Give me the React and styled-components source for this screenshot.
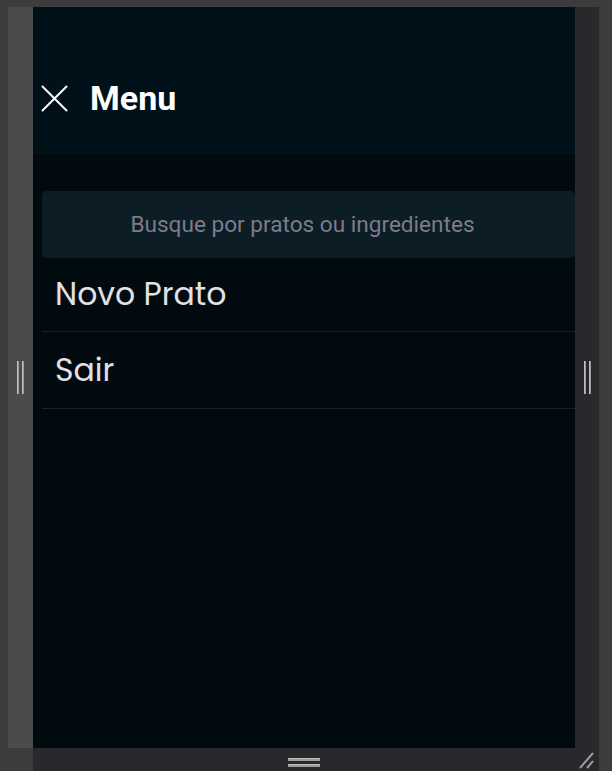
import React from "react";
import styled, { createGlobalStyle } from "styled-components";

const Global = createGlobalStyle`
  html, body { margin: 0; padding: 0; background: #3c3c3c; }
  body { width: 612px; height: 771px; overflow: hidden; }
  * { box-sizing: border-box; }
`;

const Frame = styled.div`
  display: grid;
  grid-template-columns: 8px 25px 542px 24px 13px;
  grid-template-rows: 7px 741px 23px;
  width: 612px;
  height: 771px;
  background: #3c3c3c;
`;

const SideStrip = styled.div`
  grid-column: ${(p) => p.$col};
  grid-row: 2;
  background: ${(p) => p.$bg};
  display: flex;
  align-items: center;
  justify-content: center;
  gap: 3px;
`;

const VGrip = styled.span`
  width: 2px;
  height: 33px;
  background: #9c9c9c;
  border-left: 1px solid #bdbdbd;
`;

const BottomBar = styled.div`
  grid-column: 3;
  grid-row: 3;
  background: #28292d;
  display: flex;
  flex-direction: column;
  align-items: center;
  justify-content: flex-start;
  padding-top: 10px;
  gap: 3px;
`;

const HGrip = styled.span`
  width: 32px;
  height: 2px;
  background: #9c9c9c;
  border-top: 1px solid #bdbdbd;
  box-sizing: content-box;
`;

const Corner = styled.div`
  grid-column: 4;
  grid-row: 3;
  background: #28292d;
  display: flex;
  align-items: flex-end;
  justify-content: flex-start;
  padding: 0 0 2px 4px;
`;

const Viewport = styled.div`
  grid-column: 3;
  grid-row: 2;
  background: #000a0f;
  display: flex;
  flex-direction: column;
  overflow: hidden;
`;

const Header = styled.header`
  height: 147px;
  background: #00111a;
  display: flex;
  align-items: flex-end;
  gap: 22px;
  padding: 0 0 41px 8px;
`;

const CloseButton = styled.button`
  border: none;
  background: none;
  padding: 0;
  width: 27px;
  height: 27px;
  display: flex;
  align-items: center;
  justify-content: center;
  cursor: pointer;
  margin-bottom: 1px;
`;

const Title = styled.h1`
  margin: 0;
  font-family: Roboto, "Liberation Sans", sans-serif;
  font-weight: 700;
  font-size: 34px;
  line-height: 30px;
  color: #ffffff;
`;

const Body = styled.nav`
  display: flex;
  flex-direction: column;
  padding: 37px 0 0 9px;
`;

const Search = styled.input`
  height: 67px;
  width: 100%;
  border: none;
  outline: none;
  border-radius: 5px;
  background: #0d1d25;
  padding: 0 12px 0 0;
  text-align: center;
  font-family: Roboto, "Liberation Sans", sans-serif;
  font-size: 22.6px;
  color: #c4c4cc;
  &::placeholder { color: #7c7c8a; }
`;

const Item = styled.a`
  display: flex;
  align-items: center;
  height: ${(p) => p.$h}px;
  padding: 0 0 0 13px;
  border-bottom: 1px solid #192227;
  font-family: Poppins, "Open Sans", sans-serif;
  font-weight: 400;
  font-size: 31.5px;
  color: #e1e1e6;
  text-decoration: none;
  cursor: pointer;
`;

export default function App() {
  return (
    <>
      <Global />
      <Frame>
        <SideStrip $col={2} $bg="#4b4b4b">
          <VGrip />
          <VGrip />
        </SideStrip>
        <Viewport>
          <Header>
            <CloseButton aria-label="Fechar menu">
              <svg width="27" height="27" viewBox="0 0 27 27">
                <path d="M1.5 1.5 L25.5 25.5 M25.5 1.5 L1.5 25.5" stroke="#ffffff" strokeWidth="2" strokeLinecap="round" />
              </svg>
            </CloseButton>
            <Title>Menu</Title>
          </Header>
          <Body>
            <Search placeholder="Busque por pratos ou ingredientes" />
            <Item $h={74}>Novo Prato</Item>
            <Item $h={77}>Sair</Item>
          </Body>
        </Viewport>
        <SideStrip $col={4} $bg="#28292d">
          <VGrip />
          <VGrip />
        </SideStrip>
        <BottomBar>
          <HGrip />
          <HGrip />
        </BottomBar>
        <Corner>
          <svg width="15" height="17" viewBox="0 0 15 17">
            <path d="M1 16 L14 1 M8 16 L14 9" stroke="#9c9c9c" strokeWidth="2" />
          </svg>
        </Corner>
      </Frame>
    </>
  );
}
